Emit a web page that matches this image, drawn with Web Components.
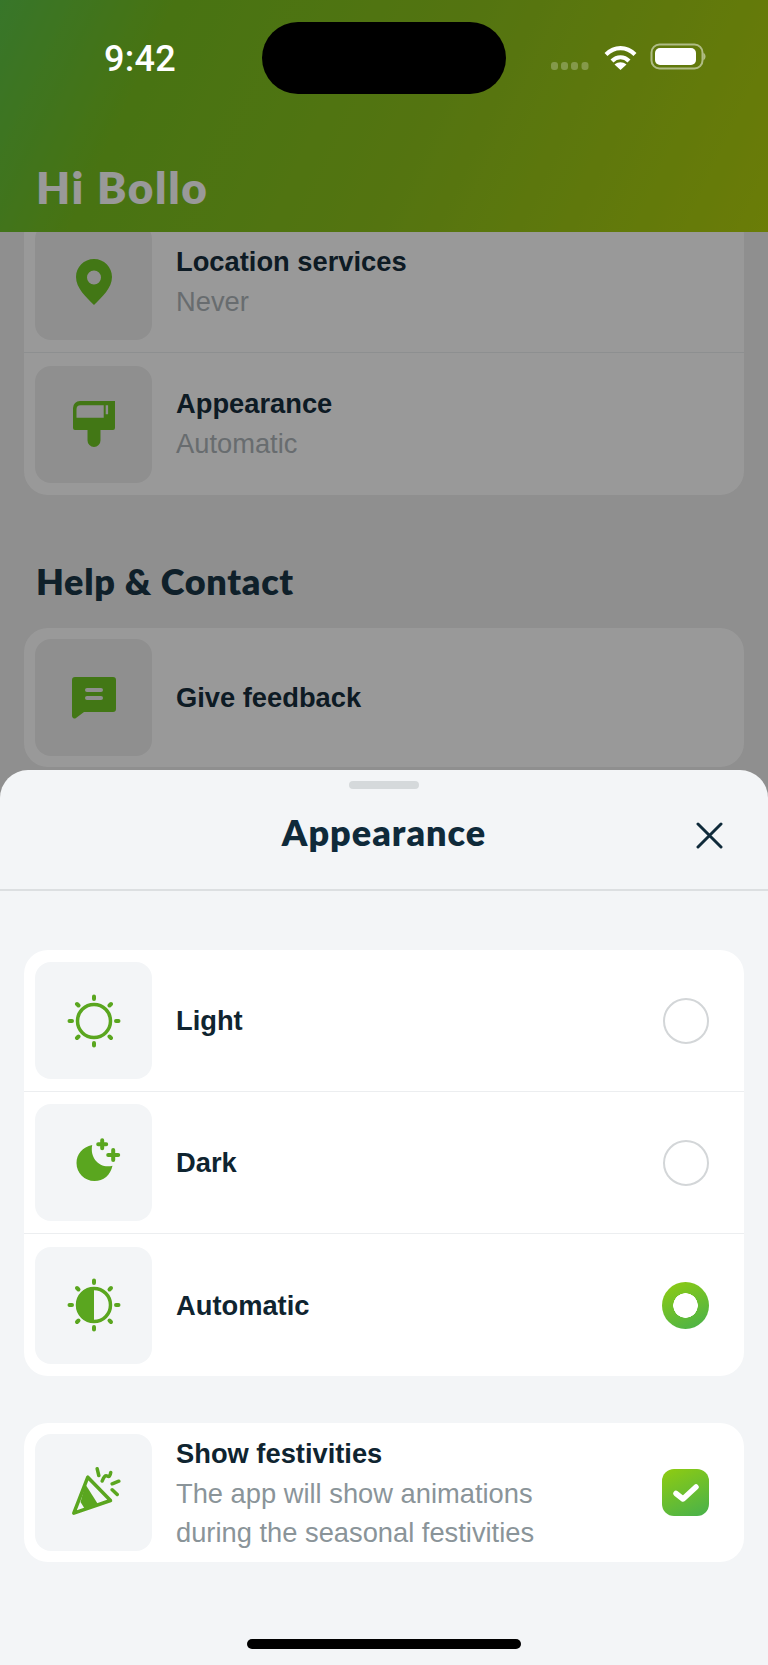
<!DOCTYPE html>
<html lang="en">
<head>
<meta charset="utf-8">
<title>Appearance</title>
<style>
  html, body { margin: 0; padding: 0; background: #8f8f8f; }
</style>
</head>
<body>

<app-screen>
  <status-bar slot="status"></status-bar>
  <app-header slot="header">Hi Bollo</app-header>

  <settings-card class="first" dim>
    <settings-row label="Location services" sub="Never">
      <svg slot="icon" width="36" height="46" viewBox="0 0 36 46"><path fill-rule="evenodd" fill="#6ec624" d="M18 0C8 0 0 8 0 18c0 11 10 20 18 28 8-8 18-17 18-28C36 8 28 0 18 0zm0 11.500a7 7 0 1 1 0 14 7 7 0 0 1 0-14z"/></svg>
    </settings-row>
    <settings-row label="Appearance" sub="Automatic">
      <svg slot="icon" width="42" height="46" viewBox="0 0 42 46"><path fill-rule="evenodd" fill="#6ec624" d="M7 0h35v27a2 2 0 0 1-2 2H27.500v10.500a6.500 6.500 0 0 1-13 0V29H2a2 2 0 0 1-2-2V7a7 7 0 0 1 7-7zm.500 4.300a4 4 0 0 0-4 4v8.400h27.200V4.300zm25.200 0v9h2.400v-9z"/></svg>
    </settings-row>
  </settings-card>

  <section-heading>Help &amp; Contact</section-heading>

  <settings-card dim>
    <settings-row label="Give feedback" compact>
      <svg slot="icon" width="44" height="42" viewBox="0 0 44 42"><path fill-rule="evenodd" fill="#6ec624" d="M3 0h38a3 3 0 0 1 3 3v29a3 3 0 0 1-3 3H12l-8 6a2.500 2.500 0 0 1-4-2V3a3 3 0 0 1 3-3zm12 11a2 2 0 0 0 0 4h14a2 2 0 0 0 0-4zm0 8a2 2 0 0 0 0 4h14a2 2 0 0 0 0-4z"/></svg>
    </settings-row>
  </settings-card>

  <bottom-sheet slot="sheet" heading="Appearance">
    <settings-card>
      <settings-row label="Light">
        <svg slot="icon" width="54" height="54" viewBox="0 0 54 54" fill="none" stroke="#5aa61f" stroke-linecap="round">
          <circle cx="27" cy="27" r="16.500" stroke-width="3.500"/>
          <path stroke-width="4" d="M27 2.500V5M27 49v2.500M2.500 27H5M49 27h2.500M10 10l1.500 1.500M44 10l-1.500 1.500M10 44l1.500-1.500M44 44l-1.500-1.500"/>
        </svg>
        <radio-mark slot="control"></radio-mark>
      </settings-row>
      <settings-row label="Dark">
        <svg slot="icon" width="54" height="54" viewBox="0 0 54 54">
          <g transform="translate(9.500 -1)">
            <path fill="#5aa61f" d="M15.700 10C6 12 0 19 0 28c0 10 8 18 18 18 9 0 16-6 18-15.300C24 34 13 24 15.700 10z"/>
            <path stroke="#5aa61f" stroke-width="4" stroke-linecap="round" d="M25.700 5.300v8M21.700 9.300h8M36.700 15v10M31.700 20h10"/>
          </g>
        </svg>
        <radio-mark slot="control"></radio-mark>
      </settings-row>
      <settings-row label="Automatic">
        <svg slot="icon" width="54" height="54" viewBox="0 0 54 54" fill="none" stroke="#5aa61f" stroke-linecap="round">
          <circle cx="27" cy="27" r="16.500" stroke-width="3.500"/>
          <path fill="#5aa61f" stroke="none" d="M27 9.500a17.500 17.500 0 0 0 0 35z"/>
          <path stroke-width="4" d="M27 2.500V5M27 49v2.500M2.500 27H5M49 27h2.500M10 10l1.500 1.500M44 10l-1.500 1.500M10 44l1.500-1.500M44 44l-1.500-1.500"/>
        </svg>
        <radio-mark slot="control" checked></radio-mark>
      </settings-row>
    </settings-card>

    <settings-card class="festive">
      <settings-row label="Show festivities" sub="The app will show animations during the seasonal festivities" compact>
        <svg slot="icon" width="54" height="54" viewBox="0 0 54 54" fill="none" stroke="#5aa61f" stroke-linecap="round" stroke-linejoin="round">
          <path stroke-width="3.500" d="M20.800 11.200 6.800 47.200 43.500 34.500z"/>
          <path fill="#5aa61f" stroke="none" d="M18.500 18.500 31.800 39.500 18.500 44 13.500 36z"/>
          <path stroke-width="3.500" d="M30.200 2.800l1.600 6.700M35.200 15c1.500-4 3-6 5-5s3 0 3.500-3.500M45.200 17.800l6.600-2.600M45.200 23.800l5 4.700"/>
        </svg>
        <check-mark slot="control"></check-mark>
      </settings-row>
    </settings-card>
  </bottom-sheet>
</app-screen>

<script>
const FONT_TITLE = '"Lato", "Liberation Sans", sans-serif';
const FONT_BODY = '"Liberation Sans", Arial, sans-serif';

class AppScreen extends HTMLElement {
  constructor() {
    super();
    this.attachShadow({ mode: 'open' });
  }

  connectedCallback() {
    this.shadowRoot.innerHTML = `
      <style>
        :host {
          display: block;
          position: relative;
          width: 768px;
          height: 1665px;
          overflow: hidden;
          background: #eeeeee;
          font-family: ${FONT_BODY};
        }
        .page { display: flex; flex-direction: column; height: 100%; isolation: isolate; }
        .scroller { flex: 1; min-height: 0; overflow: hidden; padding: 0 24px; }
        .scrim { position: absolute; inset: 0; background: rgba(0, 0, 0, .4); }
      </style>
      <div class="page">
        <slot name="header"></slot>
        <div class="scroller"><slot></slot></div>
      </div>
      <div class="scrim"></div>
      <slot name="status"></slot>
      <slot name="sheet"></slot>
    `;
  }
}

class StatusBar extends HTMLElement {
  constructor() {
    super();
    this.attachShadow({ mode: 'open' });
  }

  connectedCallback() {
    this.shadowRoot.innerHTML = `
      <style>
        :host {
          position: absolute;
          top: 0;
          left: 0;
          right: 0;
          height: 116px;
          z-index: 2;
        }
        .time {
          position: absolute;
          left: 104px;
          top: 40px;
          font: 500 36px/38px Roboto, sans-serif;
          letter-spacing: .3px;
          color: #fff;
        }
        .island {
          position: absolute;
          left: 262px;
          top: 22px;
          width: 244px;
          height: 72px;
          border-radius: 36px;
          background: #000;
        }
        svg { position: absolute; left: 548px; top: 40px; }
      </style>
      <span class="time">9:42</span>
      <div class="island"></div>
      <svg width="160" height="32" viewBox="0 0 160 32">
        <g fill="#fff" opacity=".25">
          <rect x="3" y="22" width="7" height="8" rx="3"/><rect x="13" y="22" width="7" height="8" rx="3"/>
          <rect x="23" y="22" width="7" height="8" rx="3"/><rect x="33.500" y="22" width="7" height="8" rx="3"/>
        </g>
        <g fill="none" stroke="#fff" stroke-width="4.200">
          <path d="M58 14.500c8.500-8.500 20.500-8.500 29 0"/>
          <path d="M64 21c5-5 12-5 17 0"/>
        </g>
        <path fill="#fff" d="M66.500 24.500c4-3 8-3 12 0l-6 5.500z"/>
        <rect x="103.500" y="4.500" width="51" height="24" rx="8" fill="none" stroke="#fff" stroke-opacity=".5" stroke-width="2"/>
        <rect x="107" y="8" width="41" height="17" rx="5" fill="#fff"/>
        <path d="M155.500 13v7c1.500-.6 2-2 2-3.500s-.5-2.900-2-3.500z" fill="#fff" fill-opacity=".5"/>
      </svg>
    `;
  }
}

class AppHeader extends HTMLElement {
  constructor() {
    super();
    this.attachShadow({ mode: 'open' });
  }

  connectedCallback() {
    this.shadowRoot.innerHTML = `
      <style>
        :host {
          display: flex;
          align-items: flex-end;
          box-sizing: border-box;
          flex: none;
          height: 232px;
          padding: 0 36px 21px;
          position: relative;
          z-index: 1;
          background: linear-gradient(115deg, #5dc546 0%, #78c01f 20%, #8cc21c 55%, #b2d00d 100%);
          color: #fff;
          font: 800 44px/48px ${FONT_TITLE};
          letter-spacing: 1.7px;
        }
      </style>
      <slot></slot>
    `;
  }
}

class SectionHeading extends HTMLElement {
  constructor() {
    super();
    this.attachShadow({ mode: 'open' });
  }

  connectedCallback() {
    this.shadowRoot.innerHTML = `
      <style>
        :host {
          display: block;
          padding: 65px 12px 26px;
          color: #1a3646;
          font: 800 36px/42px ${FONT_TITLE};
          letter-spacing: .7px;
        }
      </style>
      <slot></slot>
    `;
  }
}

class SettingsCard extends HTMLElement {
  constructor() {
    super();
    this.attachShadow({ mode: 'open' });
  }

  connectedCallback() {
    this.shadowRoot.innerHTML = `
      <style>
        :host {
          display: block;
          background: #fff;
          border-radius: 24px;
          overflow: hidden;
        }
        :host([dim]) {
          --tile: #efefef;
          --label: #162d3c;
          --sub: #aeb5b9;
        }
        :host(.first) { margin-top: -21px; }
        :host(.festive) { margin-top: 47px; }
        ::slotted(settings-row:not(:last-child)) { border-bottom: 1px solid #eceef0; }
      </style>
      <slot></slot>
    `;
  }
}

class SettingsRow extends HTMLElement {
  constructor() {
    super();
    this.attachShadow({ mode: 'open' });
  }

  connectedCallback() {
    const sub = this.getAttribute('sub');
    this.shadowRoot.innerHTML = `
      <style>
        :host {
          display: flex;
          align-items: center;
          box-sizing: border-box;
          min-height: 142px;
          padding: 12px 12px 12px 11px;
        }
        :host([compact]) { min-height: 0; padding-top: 11px; padding-bottom: 11px; }
        .tile {
          flex: none;
          display: flex;
          align-items: center;
          justify-content: center;
          width: 117px;
          height: 117px;
          border-radius: 16px;
          background: var(--tile, #f3f5f7);
        }
        .text { flex: none; width: 400px; margin: -2px 0; padding-left: 24px; }
        :host(:not([compact])) .text.two { padding-bottom: 2px; }
        .label { font: 700 27.3px/41px ${FONT_BODY}; color: var(--label, #0f2430); }
        .sub { font: 400 27.3px/39px ${FONT_BODY}; color: var(--sub, #8a9499); }
        .control { flex: none; display: flex; margin-right: 23px; margin-left: auto; }
      </style>
      <div class="tile"><slot name="icon"></slot></div>
      <div class="text ${sub ? 'two' : ''}">
        <div class="label"></div>
        ${sub ? '<div class="sub"></div>' : ''}
      </div>
      <div class="control"><slot name="control"></slot></div>
    `;
    this.shadowRoot.querySelector('.label').textContent = this.getAttribute('label');
    if (sub) this.shadowRoot.querySelector('.sub').textContent = sub;
  }
}

class RadioMark extends HTMLElement {
  constructor() {
    super();
    this.attachShadow({ mode: 'open' });
  }

  connectedCallback() {
    this.shadowRoot.innerHTML = `
      <style>
        :host {
          display: block;
          box-sizing: border-box;
          width: 46px;
          height: 46px;
          border-radius: 50%;
          border: 2px solid #d3d6d8;
          background: #fff;
        }
        :host([checked]) {
          width: 47px;
          height: 47px;
          border: 0;
          background: radial-gradient(circle at center, #fff 0 12px, transparent 12.500px),
            linear-gradient(155deg, #90cc10 0%, #47b14c 100%);
        }
      </style>
    `;
  }
}

class CheckMark extends HTMLElement {
  constructor() {
    super();
    this.attachShadow({ mode: 'open' });
  }

  connectedCallback() {
    this.shadowRoot.innerHTML = `
      <style>
        :host {
          display: flex;
          align-items: center;
          justify-content: center;
          width: 47px;
          height: 47px;
          border-radius: 12px;
          background: linear-gradient(155deg, #90cc10 0%, #47b14c 100%);
        }
      </style>
      <svg width="26" height="20" viewBox="0 0 26 20"><path d="M3 10.500 10 16 23 4" fill="none" stroke="#fff" stroke-width="5.500" stroke-linecap="round" stroke-linejoin="round"/></svg>
    `;
  }
}

class BottomSheet extends HTMLElement {
  constructor() {
    super();
    this.attachShadow({ mode: 'open' });
  }

  connectedCallback() {
    this.shadowRoot.innerHTML = `
      <style>
        :host {
          position: absolute;
          left: 0;
          right: 0;
          bottom: 0;
          top: 770px;
          z-index: 3;
          display: flex;
          flex-direction: column;
          background: #f3f5f7;
          border-radius: 28px 28px 0 0;
        }
        .handle {
          width: 70px;
          height: 8px;
          margin: 11px auto 0;
          border-radius: 4px;
          background: #d5d9db;
        }
        .bar {
          display: flex;
          align-items: center;
          justify-content: center;
          position: relative;
          height: 100px;
          border-bottom: 2px solid #dcdfe1;
        }
        h2 { margin: 0 0 14px; font: 800 36px/42px ${FONT_TITLE}; letter-spacing: 1px; color: #0f2a3a; }
        .close { position: absolute; right: 45px; top: 33px; display: flex; }
        .body { flex: 1; padding: 59px 24px 0; }
        .home {
          width: 274px;
          height: 10px;
          margin: 0 auto 16px;
          border-radius: 5px;
          background: #000;
        }
      </style>
      <div class="handle"></div>
      <div class="bar">
        <h2></h2>
        <span class="close">
          <svg width="27" height="27" viewBox="0 0 27 27"><path d="M2 2l23 23M25 2 2 25" stroke="#0f2a3a" stroke-width="3" stroke-linecap="round"/></svg>
        </span>
      </div>
      <div class="body"><slot></slot></div>
      <div class="home"></div>
    `;
    this.shadowRoot.querySelector('h2').textContent = this.getAttribute('heading');
  }
}

customElements.define('app-screen', AppScreen);
customElements.define('status-bar', StatusBar);
customElements.define('app-header', AppHeader);
customElements.define('section-heading', SectionHeading);
customElements.define('settings-card', SettingsCard);
customElements.define('settings-row', SettingsRow);
customElements.define('radio-mark', RadioMark);
customElements.define('check-mark', CheckMark);
customElements.define('bottom-sheet', BottomSheet);
</script>
</body>
</html>
